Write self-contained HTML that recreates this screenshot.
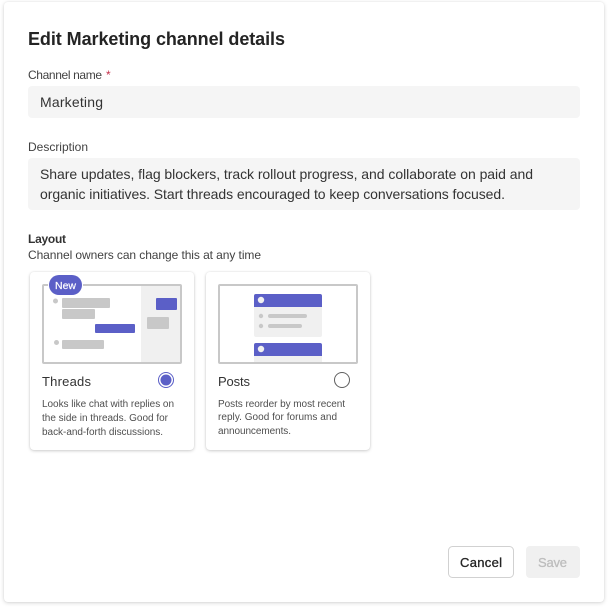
<!DOCTYPE html>
<html>
<head>
<meta charset="utf-8">
<style>
html,body{margin:0;padding:0;width:608px;height:608px;overflow:hidden;background:#fff}
#dlg{position:absolute;left:4px;top:2px;width:600px;height:600px;background:#fff;border-radius:4px;box-shadow:0 1px 4px rgba(0,0,0,.16),0 0 2px rgba(0,0,0,.06)}
.card{position:absolute;top:272px;width:164px;height:178px;background:#fff;border-radius:4px;box-shadow:0 1px 3px rgba(0,0,0,.18),0 0 2px rgba(0,0,0,.08)}
svg{position:absolute;left:0;top:0}
text{font-family:"Liberation Sans",sans-serif;fill:#242424}
</style>
</head>
<body>
<div id="dlg"></div>
<div class="card" style="left:30px"></div>
<div class="card" style="left:206px"></div>
<svg width="608" height="608" viewBox="0 0 608 608">
<text x="28" y="45" font-size="18" font-weight="700" textLength="257">Edit Marketing channel details</text>
<text x="28" y="79" font-size="12" style="fill:#424242" textLength="74">Channel name</text>
<text x="106" y="79" font-size="12" style="fill:#c4314b">*</text>
<rect x="28" y="86" width="552" height="32" rx="4" fill="#f5f5f5"/>
<text x="40" y="107" font-size="14" style="fill:#333" textLength="63">Marketing</text>
<text x="28" y="151" font-size="12" style="fill:#424242" textLength="60">Description</text>
<rect x="28" y="158" width="552" height="52" rx="4" fill="#f5f5f5"/>
<text x="40" y="179" font-size="14" style="fill:#333" textLength="493">Share updates, flag blockers, track rollout progress, and collaborate on paid and</text>
<text x="40" y="199" font-size="14" style="fill:#333" textLength="465">organic initiatives. Start threads encouraged to keep conversations focused.</text>
<text x="28" y="243" font-size="12" font-weight="700" style="fill:#333" textLength="38">Layout</text>
<text x="28" y="259" font-size="12" style="fill:#424242" textLength="233">Channel owners can change this at any time</text>

<rect x="43" y="285" width="138" height="78" fill="#fff" stroke="#c8c8c8" stroke-width="2" rx="1"/>
<rect x="141" y="286" width="39" height="76" fill="#f0f0f0"/>
<circle cx="55.500" cy="301" r="2.500" fill="#c8c8c8"/>
<rect x="62" y="298" width="48" height="10" rx="1" fill="#c8c8c8"/>
<rect x="62" y="309" width="33" height="10" rx="1" fill="#c8c8c8"/>
<rect x="95" y="324" width="40" height="9" rx="1" fill="#5b5fc7"/>
<circle cx="56.500" cy="342.500" r="2.500" fill="#c8c8c8"/>
<rect x="62" y="340" width="42" height="9" rx="1" fill="#c8c8c8"/>
<rect x="156" y="298" width="21" height="12" rx="1" fill="#5b5fc7"/>
<rect x="147" y="317" width="22" height="12" rx="1" fill="#c8c8c8"/>
<rect x="48" y="274" width="35" height="22" rx="11" fill="#fff"/>
<rect x="49" y="275" width="33" height="20" rx="10" fill="#5b5fc7"/>
<text x="55" y="289" font-size="10.500" style="fill:#fff;stroke:#fff;stroke-width:.2" textLength="21">New</text>
<text x="42" y="386" font-size="13" style="fill:#333" textLength="49">Threads</text>
<circle cx="166" cy="380" r="7.500" fill="#fff" stroke="#5b5fc7" stroke-width="1"/>
<circle cx="166" cy="380" r="5.500" fill="#5b5fc7"/>
<text x="42" y="407" font-size="10" style="fill:#4f4f4f" textLength="132">Looks like chat with replies on</text>
<text x="42" y="421" font-size="10" style="fill:#4f4f4f" textLength="126">the side in threads. Good for</text>
<text x="42" y="435" font-size="10" style="fill:#4f4f4f" textLength="121">back-and-forth discussions.</text>

<rect x="219" y="285" width="138" height="78" fill="#fff" stroke="#c8c8c8" stroke-width="2" rx="1"/>
<rect x="254" y="294" width="68" height="43" rx="2" fill="#f0f0f0"/>
<path d="M254 307V296a2 2 0 0 1 2-2h64a2 2 0 0 1 2 2v11z" fill="#5b5fc7"/>
<circle cx="261" cy="300" r="3.200" fill="#f0f0f0"/>
<circle cx="261" cy="316" r="2.200" fill="#c8c8c8"/>
<rect x="268" y="314" width="39" height="4" rx="2" fill="#c8c8c8"/>
<circle cx="261" cy="326" r="2.200" fill="#c8c8c8"/>
<rect x="268" y="324" width="34" height="4" rx="2" fill="#c8c8c8"/>
<rect x="254" y="356" width="68" height="6" fill="#f0f0f0"/>
<path d="M254 356V345a2 2 0 0 1 2-2h64a2 2 0 0 1 2 2v11z" fill="#5b5fc7"/>
<circle cx="261" cy="349" r="3.200" fill="#f0f0f0"/>
<text x="218" y="386" font-size="13" style="fill:#333" textLength="32">Posts</text>
<circle cx="342" cy="380" r="7.500" fill="#fff" stroke="#616161" stroke-width="1"/>
<text x="218" y="407" font-size="10" style="fill:#4f4f4f" textLength="127">Posts reorder by most recent</text>
<text x="218" y="420" font-size="10" style="fill:#4f4f4f" textLength="119">reply. Good for forums and</text>
<text x="218" y="434" font-size="10" style="fill:#4f4f4f" textLength="73">announcements.</text>

<rect x="448.500" y="546.500" width="65" height="31" rx="4" fill="#fff" stroke="#d1d1d1"/>
<text x="460" y="567" font-size="13" style="fill:#242424;stroke:#242424;stroke-width:.3" textLength="42">Cancel</text>
<rect x="526" y="546" width="54" height="32" rx="4" fill="#f0f0f0"/>
<text x="538" y="567" font-size="13" style="fill:#bdbdbd;stroke:#bdbdbd;stroke-width:.3" textLength="29">Save</text>
</svg>
</body>
</html>
